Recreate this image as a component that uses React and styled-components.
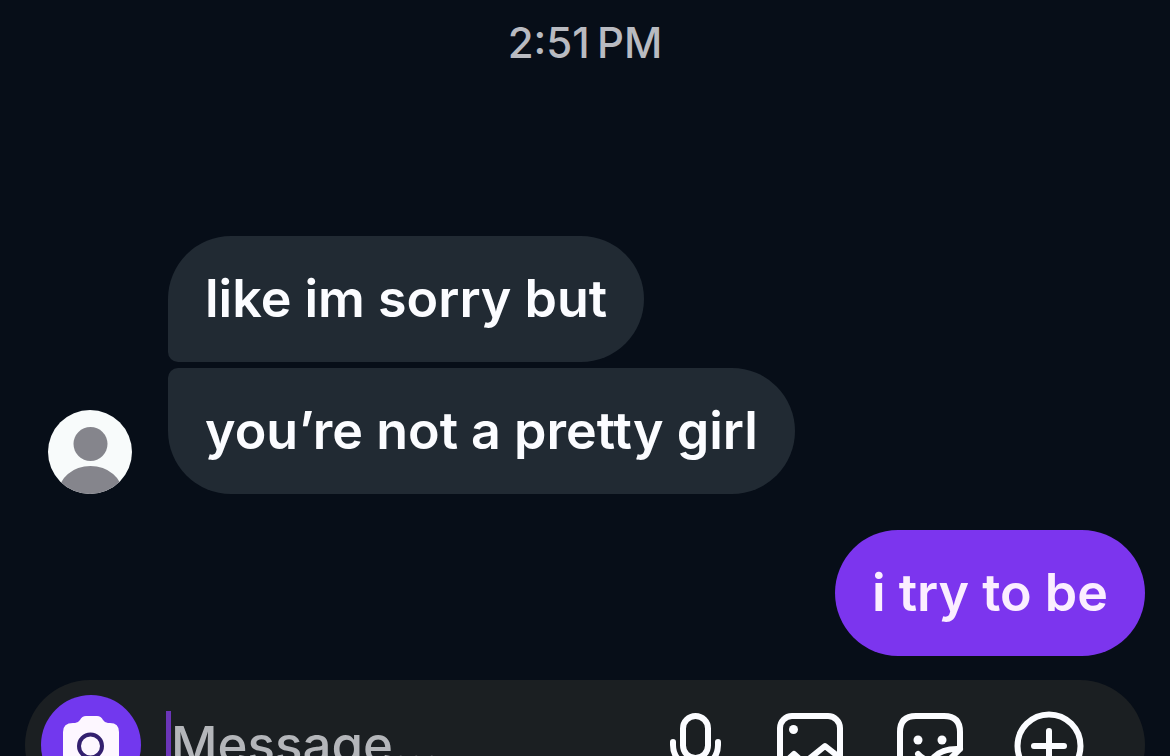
import React, { useState } from 'react'
import styled, { createGlobalStyle } from 'styled-components'

const GlobalStyle = createGlobalStyle`
  * {
    box-sizing: border-box;
  }

  body {
    margin: 0;
    background: #070e18;
    font-family: Inter, 'Liberation Sans', sans-serif;
  }
`

const Screen = styled.div`
  display: flex;
  flex-direction: column;
  height: 100vh;
  overflow: hidden;
`

const Thread = styled.main`
  display: flex;
  flex-direction: column;
  flex-shrink: 0;
  padding: 18px 25px 24px 48px;
`

const Time = styled.time`
  align-self: center;
  margin-right: 23px;
  color: #b9bbc1;
  font-size: 42px;
  font-weight: 500;
  line-height: 50px;
`

const Group = styled.section`
  display: flex;
  align-items: flex-end;
  justify-content: ${({ sent }) => (sent ? 'flex-end' : 'flex-start')};
  gap: 36px;
  margin-top: ${({ sent }) => (sent ? '36px' : '168px')};
`

const Avatar = styled.svg`
  display: block;
  flex-shrink: 0;
  width: 84px;
  height: 84px;
`

const Stack = styled.div`
  display: flex;
  flex-direction: column;
  align-items: flex-start;
  gap: 6px;
`

const radii = {
  first: '63px 63px 63px 10px',
  last: '10px 63px 63px 63px',
  single: '63px'
}

const Bubble = styled.p`
  margin: 0;
  padding: 31px 37px;
  border-radius: ${({ place = 'single' }) => radii[place]};
  background: ${({ sent }) => (sent ? '#7c35ee' : '#212a33')};
  color: ${({ sent }) => (sent ? '#fbeeff' : '#fbfcff')};
  font-size: 52px;
  font-weight: 560;
  font-variant-ligatures: none;
  line-height: 64px;
`

const Composer = styled.form`
  display: flex;
  align-items: center;
  flex-shrink: 0;
  gap: 25px;
  height: 130px;
  margin: 0 25px;
  padding: 0 60px 0 16px;
  border-radius: 65px;
  background: #1b1f22;
`

const CameraButton = styled.button`
  flex-shrink: 0;
  width: 100px;
  height: 100px;
  padding: 0;
  border: none;
  border-radius: 50%;
  background: #7238ee;

  & > svg {
    display: block;
    margin: 0 auto;
  }
`

const Field = styled.label`
  display: flex;
  align-items: center;
  flex: 1;
  min-width: 0;
`

const Caret = styled.span`
  flex-shrink: 0;
  width: 5px;
  height: 68px;
  background: #6b35b8;
`

const Input = styled.input`
  flex: 1;
  min-width: 0;
  padding: 0;
  border: none;
  outline: none;
  background: transparent;
  color: #fbfcff;
  font: 500 51px / 64px Inter, 'Liberation Sans', sans-serif;

  &::placeholder {
    color: #b4b6ba;
    opacity: 1;
  }
`

const Actions = styled.div`
  display: flex;
  align-items: center;
  gap: 48px;
`

const IconButton = styled.button`
  width: 72px;
  height: 72px;
  padding: 0;
  border: none;
  background: none;
  color: #fbfcff;

  & > svg {
    display: block;
  }
`

const Icon = ({ children }) => (
  <svg
    width="72"
    height="72"
    viewBox="0 0 72 72"
    fill="none"
    stroke="currentColor"
    strokeWidth="6"
    strokeLinecap="round"
    strokeLinejoin="round"
    aria-hidden="true"
  >
    {children}
  </svg>
)

const Person = () => (
  <Avatar viewBox="0 0 84 84" role="img" aria-label="Profile">
    <clipPath id="face">
      <circle cx="42" cy="42" r="42" />
    </clipPath>
    <g clipPath="url(#face)">
      <rect width="84" height="84" fill="#f8fbfb" />
      <circle cx="42.500" cy="34" r="17" fill="#85858c" />
      <ellipse cx="42.500" cy="83" rx="32" ry="27" fill="#85858c" />
    </g>
  </Avatar>
)

const Camera = () => (
  <svg width="56" height="60" viewBox="0 0 56 60" aria-hidden="true">
    <path
      d="M10 8h2q3 0 5-3q2-4 6-4h11q4 0 6 4q2 3 5 3h2q9 0 9 9v33q0 9-9 9H9q-9 0-9-9V17q0-9 10-9z"
      fill="#fdf7ff"
    />
    <circle cx="27.500" cy="31" r="11.500" fill="none" stroke="#33206f" strokeWidth="4" />
  </svg>
)

const received = [
  { text: 'like im sorry but', place: 'first' },
  { text: 'you’re not a pretty girl', place: 'last' }
]

const actions = [
  {
    label: 'Voice message',
    icon: (
      <>
        <rect x="30" y="7" width="25" height="42" rx="12.500" />
        <path d="M20 33v3a22.500 22.500 0 0 0 45 0v-3M42.500 59v8" />
      </>
    )
  },
  {
    label: 'Photo',
    icon: (
      <>
        <rect x="7" y="7" width="60" height="60" rx="12" />
        <circle cx="20.500" cy="20.500" r="4.500" fill="currentColor" stroke="none" />
        <path d="M9 56l12-11l10 9l21-17l14 11" />
      </>
    )
  },
  {
    label: 'Sticker',
    icon: (
      <>
        <path d="M67 40V23Q67 7 51 7H23Q7 7 7 23v28q0 16 16 16h17L67 40Q50 39 41 48Q38 53 40 67" />
        <circle cx="25" cy="31" r="4.500" fill="currentColor" stroke="none" />
        <circle cx="49" cy="31" r="4.500" fill="currentColor" stroke="none" />
        <path d="M25 45q7 8 15 5" />
      </>
    )
  },
  {
    label: 'More',
    icon: (
      <>
        <circle cx="36" cy="37" r="31.500" />
        <path d="M36 22v30M21 37h30" />
      </>
    )
  }
]

const App = () => {
  const [message, setMessage] = useState('')

  return (
    <Screen>
      <GlobalStyle />
      <Thread>
        <Time>2:51&#8239;PM</Time>
        <Group>
          <Person />
          <Stack>
            {received.map(({ text, place }) => (
              <Bubble key={text} place={place}>
                {text}
              </Bubble>
            ))}
          </Stack>
        </Group>
        <Group sent>
          <Bubble sent>i try to be</Bubble>
        </Group>
      </Thread>
      <Composer onSubmit={e => e.preventDefault()}>
        <CameraButton type="button" aria-label="Camera">
          <Camera />
        </CameraButton>
        <Field>
          <Caret />
          <Input
            aria-label="Message"
            placeholder="Message..."
            value={message}
            onChange={e => setMessage(e.target.value)}
          />
        </Field>
        <Actions>
          {actions.map(({ label, icon }) => (
            <IconButton key={label} type="button" aria-label={label}>
              <Icon>{icon}</Icon>
            </IconButton>
          ))}
        </Actions>
      </Composer>
    </Screen>
  )
}

export default App
